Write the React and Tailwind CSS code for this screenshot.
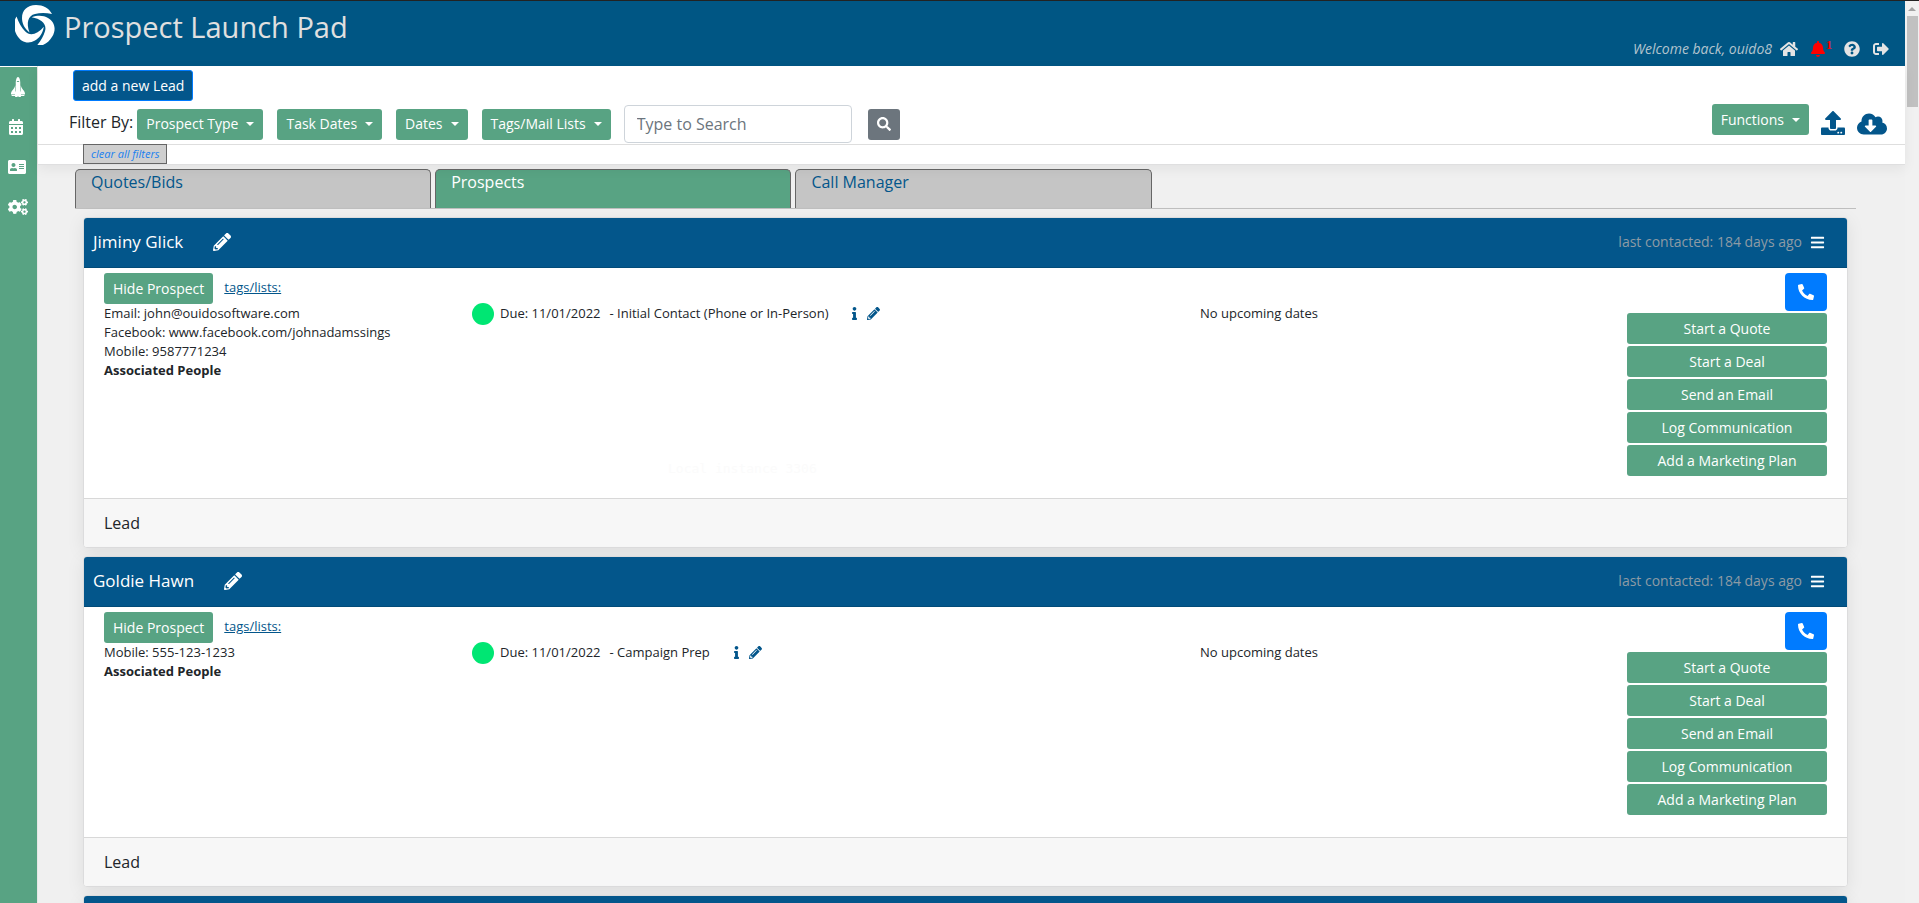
import { useState } from 'react';
import {
  FaSpaceShuttle,
  FaCalendarAlt,
  FaAddressCard,
  FaCogs,
  FaHome,
  FaBell,
  FaQuestionCircle,
  FaSignOutAlt,
  FaSearch,
  FaUpload,
  FaCloudDownloadAlt,
  FaPencilAlt,
  FaBars,
  FaInfo,
  FaPhone,
} from 'react-icons/fa';

const FILTERS = ['Prospect Type', 'Task Dates', 'Dates', 'Tags/Mail Lists'];
const TABS = ['Quotes/Bids', 'Prospects', 'Call Manager'];
const ACTIONS = ['Start a Quote', 'Start a Deal', 'Send an Email', 'Log Communication', 'Add a Marketing Plan'];

const PROSPECTS = [
  {
    id: 1,
    name: 'Jiminy Glick',
    contacts: ['Email: john@ouidosoftware.com', 'Facebook: www.facebook.com/johnadamssings', 'Mobile: 9587771234'],
    due: '11/01/2022',
    task: 'Initial Contact (Phone or In-Person)',
    note: 'Local instance 3306',
  },
  {
    id: 2,
    name: 'Goldie Hawn',
    contacts: ['Mobile: 555-123-1233'],
    due: '11/01/2022',
    task: 'Campaign Prep',
  },
];

function Logo() {
  const blade = 'M37 9 C34 3 28 0 21 0 C12 0 7 5.5 7 13 C7 18 9 23 14.5 27.5 C11 18 13 10.5 20 9 C25 7.8 31 7.8 37 9 Z';
  return (
    <svg className="h-10 w-10 shrink-0" viewBox="0 0 40 40" fill="white" aria-hidden="true">
      <path d={blade} />
      <path d={blade} transform="rotate(120 20 20.5)" />
      <path d={blade} transform="rotate(240 20 20.5)" />
    </svg>
  );
}

function Caret() {
  return <span className="ml-2 border-x-4 border-t-4 border-x-transparent border-t-white" />;
}

function GreenButton({ children, className = '' }) {
  return (
    <button
      className={`flex h-[31px] items-center justify-center rounded-[3px] bg-[#58a383] px-[9px] text-sm text-white ${className}`}
    >
      {children}
    </button>
  );
}

function Header() {
  return (
    <header className="flex h-[66px] items-start justify-between border-t border-[#222] bg-[#005684] pl-[15px] pr-4">
      <div className="flex items-start gap-[9px] pt-1">
        <Logo />
        <h1 className="text-[29px] leading-11 text-[#e0e0e0]">Prospect Launch Pad</h1>
      </div>
      <div className="flex items-center pt-9 text-[#e4e4e4]">
        <span className="mr-2 text-sm leading-6 italic text-[#b3c4ce]">Welcome back, ouido8</span>
        <a href="#home" aria-label="Home" className="mr-3">
          <FaHome size={18} />
        </a>
        <a href="#alerts" aria-label="Alerts" className="mr-3 flex items-start text-[#ff0000]">
          <FaBell size={16} />
          <span className="font-['Liberation_Serif',serif] text-xs leading-2 font-bold">1</span>
        </a>
        <a href="#help" aria-label="Help" className="mr-[13px]">
          <FaQuestionCircle size={16} />
        </a>
        <a href="#logout" aria-label="Log out">
          <FaSignOutAlt size={16} />
        </a>
      </div>
    </header>
  );
}

function Sidebar() {
  return (
    <nav className="mt-px flex w-[37px] shrink-0 flex-col gap-6 bg-[#58a383] pt-3 pl-2 text-white">
      <a href="#launch" aria-label="Launch pad" className="flex h-4 items-center">
        <FaSpaceShuttle size={20} className="-rotate-90" />
      </a>
      <a href="#calendar" aria-label="Calendar" className="flex h-4 items-center">
        <FaCalendarAlt size={16} />
      </a>
      <a href="#contacts" aria-label="Contacts" className="flex h-4 items-center">
        <FaAddressCard size={18} />
      </a>
      <a href="#settings" aria-label="Settings" className="flex h-4 items-center">
        <FaCogs size={20} />
      </a>
    </nav>
  );
}

function Toolbar() {
  return (
    <div className="relative z-10 border-b border-[#dfdfe0] bg-white shadow-[0_4px_12px_rgba(0,0,0,0.06)]">
      <div className="flex h-[79px] items-end justify-between border-b border-[#dedede] pr-[18px] pb-px pl-[31px]">
        <div>
          <button className="ml-1 block h-[31px] rounded-[3px] border border-[#007bff] bg-[#03568b] px-2 text-sm text-white">
            add a new Lead
          </button>
          <div className="mt-1 flex h-[38px] items-center">
            <span className="mr-1 pb-1 text-base">Filter By:</span>
            <div className="flex gap-[14px]">
              {FILTERS.map((filter) => (
                <GreenButton key={filter}>
                  {filter}
                  <Caret />
                </GreenButton>
              ))}
            </div>
            <input
              type="text"
              aria-label="Search"
              placeholder="Type to Search"
              className="ml-[13px] h-[38px] w-[228px] rounded border border-[#ced4da] bg-white px-3 text-base placeholder:text-[#6c757d]"
            />
            <button aria-label="Run search" className="ml-4 flex h-[31px] w-8 items-center justify-center rounded-[3px] bg-[#6c757d] text-white">
              <FaSearch size={14} />
            </button>
          </div>
        </div>
        <div className="flex items-end pb-2 text-[#03568b]">
          <GreenButton className="mr-3">
            Functions
            <Caret />
          </GreenButton>
          <a href="#upload" aria-label="Upload" className="mr-3">
            <FaUpload size={24} />
          </a>
          <a href="#download" aria-label="Download">
            <FaCloudDownloadAlt size={30} className="-my-1" />
          </a>
        </div>
      </div>
      <button className="-mt-px ml-[45px] block h-5 border border-[#666] bg-[#cfcfcf] px-[7px] text-[11px] leading-4 italic text-[#1a7ff0]">
        clear all filters
      </button>
    </div>
  );
}

function Tabs({ active, onSelect }) {
  return (
    <div role="tablist" className="flex gap-1 border-b border-[#bfbfbf]">
      {TABS.map((tab) => (
        <button
          key={tab}
          role="tab"
          aria-selected={tab === active}
          onClick={() => onSelect(tab)}
          className={`flex h-[39px] w-1/5 items-start rounded-t-[5px] border border-b-0 border-[#666] px-[15px] text-base ${
            tab === active ? 'bg-[#58a383] text-white' : 'bg-[#c5c5c5] text-[#03568b]'
          }`}
        >
          {tab}
        </button>
      ))}
    </div>
  );
}

function Card({ header, children }) {
  return (
    <article className="shrink-0 overflow-hidden rounded border border-[#dcdcdd] bg-white shadow-[0_4px_18px_rgba(0,0,0,0.08)]">
      <div className="flex h-[50px] items-center justify-between border-b border-[#024b78] bg-[#03568b] pr-[22px] pb-px pl-[9px] text-white">
        {header}
      </div>
      {children}
    </article>
  );
}

function ProspectCard({ prospect }) {
  return (
    <Card
      header={
        <>
          <div className="flex items-center gap-[30px]">
            <h2 className="text-[17px] leading-6">{prospect.name}</h2>
            <button aria-label={`Edit ${prospect.name}`}>
              <FaPencilAlt size={18} />
            </button>
          </div>
          <div className="flex items-center gap-2">
            <span className="text-sm leading-6 text-[#8d9ba5]">last contacted: 184 days ago</span>
            <button aria-label="Card menu">
              <FaBars size={15} />
            </button>
          </div>
        </>
      }
    >
      <div className="grid grid-cols-[368fr_728fr_627fr] px-5 pt-[5px] pb-[22px] text-[13px] leading-[19px]">
        <div>
          <div className="flex items-start gap-[11px]">
            <GreenButton>Hide Prospect</GreenButton>
            <a href="#tags" className="pt-[5px] text-[#03568b] underline">
              tags/lists:
            </a>
          </div>
          {prospect.contacts.map((line) => (
            <p key={line}>{line}</p>
          ))}
          <p className="font-bold">Associated People</p>
        </div>

        <div className="pt-[31px]">
          <div className="flex h-[19px] items-center">
            <span className="mr-[6px] size-[22px] rounded-full bg-[#00e673]" />
            <span className="mr-[9px]">Due: {prospect.due}</span>
            <span className="mr-5">- {prospect.task}</span>
            <button aria-label="Task details" className="mr-[6px] text-[#03568b]">
              <FaInfo size={13} />
            </button>
            <button aria-label="Edit task" className="text-[#03568b]">
              <FaPencilAlt size={13} />
            </button>
          </div>
          {prospect.note && (
            <p className="mt-[138px] pl-[196px] font-['DejaVu_Sans_Mono',monospace] text-[13px] leading-[15px] text-[#fbfbfb]">{prospect.note}</p>
          )}
        </div>

        <div className="flex justify-between">
          <p className="pt-[31px]">No upcoming dates</p>
          <div className="flex w-[200px] flex-col gap-[2px]">
            <button aria-label={`Call ${prospect.name}`} className="flex h-[38px] w-[42px] items-center justify-center self-end rounded bg-[#007bff] text-white">
              <FaPhone size={16} className="-scale-x-100" />
            </button>
            {ACTIONS.map((action) => (
              <GreenButton key={action}>{action}</GreenButton>
            ))}
          </div>
        </div>
      </div>

      <div className="border-t border-[#d8d8d8] bg-[#f7f7f7] px-5 py-3 text-base">Lead</div>
    </Card>
  );
}

function ScrollBar() {
  return (
    <div className="mt-px flex w-[14px] shrink-0 flex-col items-center bg-[#f1f1f1]" aria-hidden="true">
      <span className="mt-[6px] mb-[5px] border-x-4 border-b-4 border-x-transparent border-b-[#a3a3a3]" />
      <span className="h-[91px] w-[11px] bg-[#c1c1c1]" />
    </div>
  );
}

export default function App() {
  const [tab, setTab] = useState('Prospects');

  return (
    <div className="flex h-screen overflow-hidden bg-[#222] font-['Open_Sans',sans-serif] text-[#212529]">
      <div className="flex min-w-0 flex-1 flex-col bg-white">
        <Header />
        <div className="flex min-h-0 flex-1">
          <Sidebar />
          <main className="flex min-w-0 flex-1 flex-col border-l border-[#e6e6e6] bg-[#f0f0f0]">
            <Toolbar />
            <div className="flex min-h-0 flex-1 flex-col pt-1 pr-[49px] pl-[37px]">
              <Tabs active={tab} onSelect={setTab} />
              <div className="flex flex-col gap-2 px-2 pt-2">
                {PROSPECTS.map((prospect) => (
                  <ProspectCard key={prospect.id} prospect={prospect} />
                ))}
                {/* next card, still loading */}
                <Card />
              </div>
            </div>
          </main>
        </div>
      </div>
      <ScrollBar />
    </div>
  );
}
